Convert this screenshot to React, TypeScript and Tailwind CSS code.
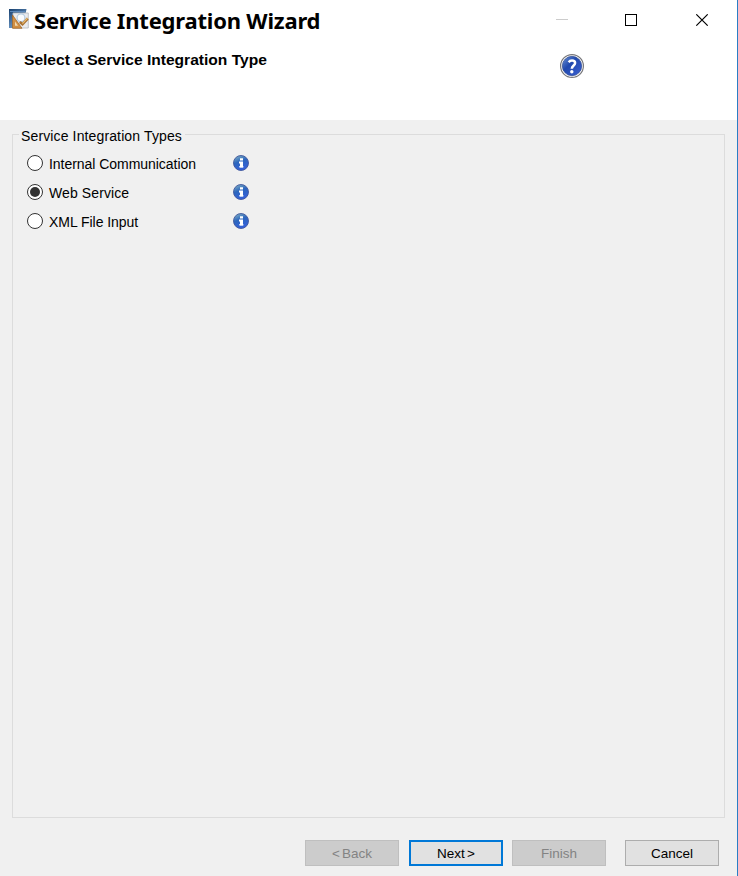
import { useState } from "react";
import clsx from "clsx";

const integrationTypes = [
  { id: "internal", label: "Internal Communication", spacing: "tracking-[-0.040px]" },
  { id: "web", label: "Web Service", spacing: "tracking-[0.100px]" },
  { id: "xml", label: "XML File Input", spacing: "tracking-[-0.040px]" },
];

function WizardIcon() {
  return (
    <svg width="20" height="20" viewBox="0 0 20 20" className="shrink-0">
      <defs>
        <linearGradient id="wizardBlue" x1="0" y1="0" x2="0.600" y2="1">
          <stop offset="0" stopColor="#17406f" />
          <stop offset="1" stopColor="#7ba6d3" />
        </linearGradient>
      </defs>
      <path d="M0 0h17.500l-1 5H5v14H0z" fill="url(#wizardBlue)" />
      <path d="M1 2.500h15" stroke="#5b88ba" strokeWidth="1" />
      <path d="M4 4h15.300v15H4z" fill="#e9ebee" stroke="#b4b8bd" strokeWidth="0.800" />
      <circle cx="12" cy="8.800" r="3.900" fill="#f8fafc" stroke="#b4cbe0" strokeWidth="1.200" />
      <path d="M3.500 6L13 19.300H3.500z" fill="#d08f43" stroke="#9c6122" strokeWidth="0.700" />
      <path d="M6 12.500l3 4.300H6z" fill="#f1d9b0" />
      <path d="M18.800 9.500l-5.300 5.800-2.700-2.300" fill="none" stroke="#a97334" strokeWidth="2.600" />
      <path d="M18.500 9.200l-5 5.500" stroke="#edbe72" strokeWidth="1.100" />
    </svg>
  );
}

function HelpIcon() {
  return (
    <svg width="24" height="24" viewBox="0 0 24 24">
      <defs>
        <linearGradient id="helpBlue" x1="0" y1="0" x2="1" y2="1">
          <stop offset="0" stopColor="#6f96d6" />
          <stop offset="0.400" stopColor="#2149ae" />
          <stop offset="1" stopColor="#3b60d2" />
        </linearGradient>
      </defs>
      <circle cx="12" cy="12" r="11.400" fill="#fff" stroke="#77777b" strokeWidth="1.200" />
      <circle cx="12" cy="12" r="9.700" fill="url(#helpBlue)" stroke="#2a4690" strokeWidth="0.700" />
      <path
        d="M8.700 8.300c.8-1.200 2-1.700 3.300-1.700 1.900 0 3.100.9 3.100 2.500 0 2.400-3.200 2.400-3.300 5.600"
        fill="none"
        stroke="#fff"
        strokeWidth="2.500"
      />
      <circle cx="11.800" cy="17.700" r="1.700" fill="#fff" />
    </svg>
  );
}

function InfoIcon() {
  return (
    <svg width="16" height="16" viewBox="0 0 16 16">
      <defs>
        <linearGradient id="infoBlue" x1="0.200" y1="0" x2="0.600" y2="1">
          <stop offset="0" stopColor="#7fb0c4" />
          <stop offset="0.420" stopColor="#2c66bd" />
          <stop offset="1" stopColor="#3560dc" />
        </linearGradient>
      </defs>
      <circle cx="8" cy="8" r="7.500" fill="url(#infoBlue)" stroke="#41579c" strokeWidth="0.900" />
      <path d="M7 3.200h3v2.300H7zM6 6.500h4v6H7V8.500H6z" fill="#fff" />
      <path d="M6 11h4.500v1.500H6z" fill="#fff" fillOpacity="0.700" />
    </svg>
  );
}

function Radio({ checked }: { checked: boolean }) {
  return (
    <span className="flex size-4 shrink-0 items-center justify-center rounded-full border border-[#333] bg-white">
      {checked && <span className="size-2.5 rounded-full bg-[#333]" />}
    </span>
  );
}

function TitleBar() {
  return (
    <div className="flex h-10 items-start">
      <div className="flex flex-1 gap-[5px] pt-[9px] pl-[9px]">
        <WizardIcon />
        <h1 className="-mt-[5px] whitespace-nowrap font-['Noto_Sans',sans-serif] text-[22px] leading-8 font-bold tracking-[-0.200px]">
          Service Integration Wizard
        </h1>
      </div>
      <div className="flex gap-[57px] pt-3.5 pr-7">
        <svg width="12" height="12" viewBox="0 0 12 12" shapeRendering="crispEdges">
          <path d="M0 5.500h12" stroke="#ccc" />
        </svg>
        <svg width="12" height="12" viewBox="0 0 12 12" shapeRendering="crispEdges">
          <path d="M.5.5h11v11H.5z" fill="none" stroke="#000" />
        </svg>
        <svg width="15" height="12" viewBox="0 0 15 12">
          <path d="M2.300.3l11.400 11.400M13.700.3L2.300 11.700" stroke="#000" strokeWidth="1.100" />
        </svg>
      </div>
    </div>
  );
}

function WizardButton({ label, variant = "normal" }: { label: string; variant?: "normal" | "primary" | "disabled" }) {
  return (
    <button
      disabled={variant === "disabled"}
      className={clsx(
        "flex h-[26px] w-[94px] items-center justify-center whitespace-nowrap pt-px text-[13.500px] leading-4 [word-spacing:-1.500px]",
        variant === "normal" && "border border-[#adadad] bg-[#e1e1e1]",
        variant === "primary" && "border-2 border-[#0078d7] bg-[#e1e1e1]",
        variant === "disabled" && "border border-[#bfbfbf] bg-[#ccc] text-[#838383]",
      )}
    >
      {label}
    </button>
  );
}

export default function App() {
  const [selected, setSelected] = useState("web");

  return (
    <div className="flex h-[876px] w-[738px] flex-col overflow-hidden border-r border-[#2a7ec5] bg-[#f0f0f0] font-['Liberation_Sans',sans-serif] text-black">
      <header className="h-[120px] shrink-0 bg-white">
        <TitleBar />
        <div className="flex justify-between pr-[153px] pl-6">
          <h2 className="mt-[12px] origin-left scale-x-[1.112] whitespace-nowrap text-[14px] leading-4 font-bold">
            Select a Service Integration Type
          </h2>
          <div className="mt-3.5">
            <HelpIcon />
          </div>
        </div>
      </header>

      <main className="mt-3.5 ml-3 h-[684px] w-[713px] shrink-0 border border-[#dcdcdc]">
        <h3 className="-mt-[7px] ml-1.5 w-[166px] whitespace-nowrap bg-[#f0f0f0] pl-0.5 text-[14px] leading-4 tracking-[0.130px]">
          Service Integration Types
        </h3>
        <div className="mt-[11px] ml-3.5 flex flex-col gap-[13px]">
          {integrationTypes.map(({ id, label, spacing }) => (
            <div key={id} className="flex h-4 w-[222px] items-center justify-between">
              <button className="flex items-center gap-1.5" onClick={() => setSelected(id)}>
                <Radio checked={selected === id} />
                <span className={clsx("mt-0.5 whitespace-nowrap text-[14px] leading-4", spacing)}>{label}</span>
              </button>
              <InfoIcon />
            </div>
          ))}
        </div>
      </main>

      <footer className="mt-[22px] flex pl-[305px]">
        <WizardButton label="< Back" variant="disabled" />
        <div className="ml-2.5">
          <WizardButton label="Next >" variant="primary" />
        </div>
        <div className="ml-[9px]">
          <WizardButton label="Finish" variant="disabled" />
        </div>
        <div className="ml-[19px]">
          <WizardButton label="Cancel" />
        </div>
      </footer>
    </div>
  );
}
